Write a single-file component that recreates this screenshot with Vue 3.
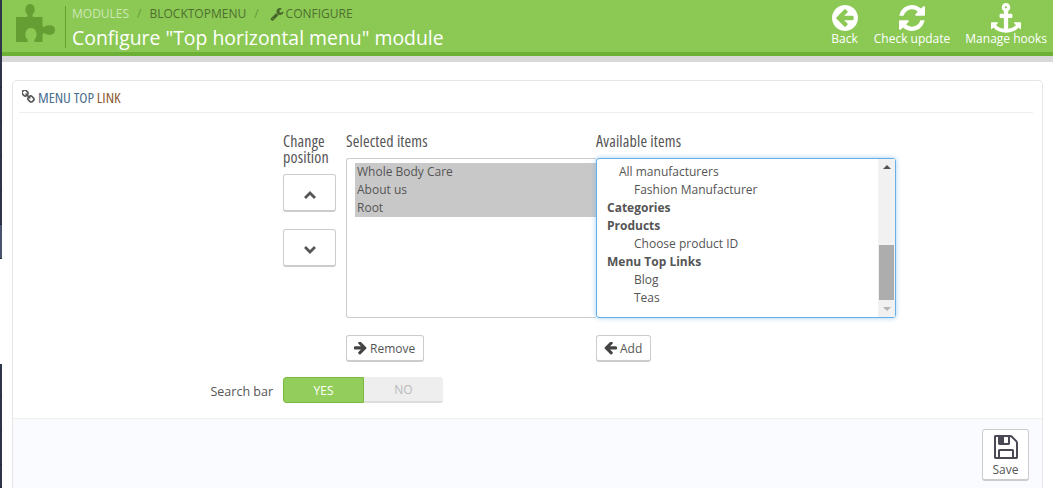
<script setup>
const railTop = [88, 34, 35, 34, 34]
const railBottom = [33, 34, 34, 23]
const selected = ['Whole Body Care', 'About us', 'Root']
const available = [
  { text: 'All manufacturers', level: 1 },
  { text: 'Fashion Manufacturer', level: 2 },
  { text: 'Categories', level: 0 },
  { text: 'Products', level: 0 },
  { text: 'Choose product ID', level: 2 },
  { text: 'Menu Top Links', level: 0 },
  { text: 'Blog', level: 2 },
  { text: 'Teas', level: 2 }
]
</script>

<template>
  <div class="page">
    <aside class="rail">
      <div v-for="(h, i) in railTop" :key="'t' + i" class="seg" :style="{ height: h + 'px' }"></div>
      <div class="seg active"></div>
      <div class="gap"></div>
      <div v-for="(h, i) in railBottom" :key="'b' + i" class="seg" :style="{ height: h + 'px' }"></div>
    </aside>

    <main class="main">
      <header class="head">
        <svg class="puzzle" viewBox="16 4 40 40" width="40" height="40">
          <path fill="#659f33" d="M16 17H26C28 17 28 15 27 14C24 11 25 4 30 4C35 4 36 11 33 14C32 15 32 17 34 17H42.500V25C42.500 27 44 27 45 26.500C47 25 50 25 52 25.500C56 26.500 56 33.500 52 34.500C50 35 47 35 45 33.500C44 33 42.500 33 42.500 35V42H35C34 42 34 40 35 39C38 36 37 28 31 28C25 28 24 36 27 39C28 40 28 42 27 42H16Z"/>
        </svg>
        <div class="titles">
          <div class="crumbs">
            <span class="c-first">MODULES</span>
            <span class="sep">/</span>
            <span>BLOCKTOPMENU</span>
            <span class="sep">/</span>
            <span class="c-last">
              <svg viewBox="0 0 1792 1792" width="14" height="14"><path fill="#45652a" d="M448 1472q0-26-19-45t-45-19-45 19-19 45 19 45 45 19 45-19 19-45zm644-420l-682 682q-37 37-90 37-52 0-91-37l-106-108q-38-36-38-90 0-53 38-91l681-681q39 98 114.500 173.500t173.500 114.500zm634-435q0 39-23 106-47 134-164.500 217.500t-258.500 83.500q-185 0-316.500-131.500t-131.500-316.500 131.500-316.500 316.500-131.500q58 0 121.500 16.500t107.500 46.500q16 11 16 28t-16 28l-293 169v224l193 106q5-3 79-48.500t135.500-81 70.500-35.500q15 0 23.500 10t8.500 25z"/></svg>
              CONFIGURE
            </span>
          </div>
          <h1 class="title">Configure "Top horizontal menu" module</h1>
        </div>
        <nav class="tools">
          <a class="tool tool-back">
            <svg viewBox="0 0 1536 1536" width="26" height="26"><path fill="#fff" transform="translate(0 -128)" d="M1280 960v-128q0-26-19-45t-45-19h-502l189-189q19-19 19-45t-19-45l-91-91q-18-18-45-18t-45 18l-362 362-91 91q-18 18-18 45t18 45l91 91 362 362q18 18 45 18t45-18l91-91q18-18 18-45t-18-45l-189-189h502q26 0 45-19t19-45zm256-64q0 209-103 385.500t-279.500 279.500-385.500 103-385.500-103-279.500-279.500-103-385.500 103-385.500 279.500-279.500 385.500-103 385.500 103 279.500 279.500 103 385.500z"/></svg>
            <span>Back</span>
          </a>
          <a class="tool tool-update">
            <svg viewBox="128 128 1536 1536" width="26" height="26"><path fill="#fff" d="M1639 1056q0 5-1 7-64 268-268 434.500t-478 166.500q-146 0-282.500-55t-243.500-157l-129 129q-19 19-45 19t-45-19-19-45v-448q0-26 19-45t45-19h448q26 0 45 19t19 45-19 45l-137 137q71 66 161 102t187 36q134 0 250-65t186-179q11-17 53-117 8-23 30-23h192q13 0 22.500 9.500t9.500 22.500zm25-800v448q0 26-19 45t-45 19h-448q-26 0-45-19t-19-45 19-45l138-138q-148-137-349-137-134 0-250 65t-186 179q-11 17-53 117-8 23-30 23h-199q-13 0-22.500-9.500t-9.500-22.500v-7q65-268 270-434.500t480-166.500q146 0 284 55.500t245 156.500l130-129q19-19 45-19t45 19 19 45z"/></svg>
            <span>Check update</span>
          </a>
          <a class="tool tool-hooks">
            <svg viewBox="0 0 1792 1792" width="30" height="30"><path fill="#fff" d="M960 256q0-26-19-45t-45-19-45 19-19 45 19 45 45 19 45-19 19-45zm832 928v352q0 22-20 30-8 2-12 2-12 0-23-9l-93-93q-119 143-318.500 226.500t-429.500 83.500-429.500-83.500-318.500-226.500l-93 93q-9 9-23 9-4 0-12-2-20-8-20-30v-352q0-14 9-23t23-9h352q22 0 30 20 8 19-7 35l-100 100q67 91 189.500 153.500t271.500 82.500v-647h-192q-26 0-45-19t-19-45v-128q0-26 19-45t45-19h192v-163q-58-34-93-92.500t-35-128.500q0-106 75-181t181-75 181 75 75 181q0 70-35 128.500t-93 92.500v163h192q26 0 45 19t19 45v128q0 26-19 45t-45 19h-192v647q149-20 271.500-82.500t189.500-153.500l-100-100q-15-16-7-35 8-20 30-20h352q14 0 23 9t9 23z"/></svg>
            <span>Manage hooks</span>
          </a>
        </nav>
      </header>
      <div class="greybar"></div>

      <section class="panel">
        <div class="panel-head">
          <svg viewBox="128 128 1536 1536" width="13" height="13"><path fill="#555" d="M1456 1216q0-40-28-68l-208-208q-28-28-68-28-42 0-72 32 3 3 19 18.500t21.500 21.500 15 19 13 25.500 3.500 27.500q0 40-28 68t-68 28q-15 0-27.500-3.500t-25.500-13-19-15-21.500-21.500-18.500-19q-33 31-33 73 0 40 28 68l206 207q27 27 68 27 40 0 68-26l147-146q28-28 28-67zm-703-705q0-40-28-68l-206-207q-28-28-68-28-39 0-68 27l-147 146q-28 28-28 67 0 40 28 68l208 208q27 27 68 27 42 0 72-31-3-3-19-18.500t-21.500-21.500-15-19-13-25.500-3.500-27.500q0-40 28-68t68-28q15 0 27.500 3.500t25.500 13 19 15 21.500 21.500 18.500 19q33-31 33-73zm895 705q0 120-85 203l-147 146q-83 83-203 83-121 0-204-85l-206-207q-83-83-83-203 0-123 88-209l-88-88q-86 88-208 88-120 0-204-84l-208-208q-84-84-84-204t85-203l147-146q83-83 203-83 121 0 204 85l206 207q83 83 83 203 0 123-88 209l88 88q86-88 208-88 120 0 204 84l208 208q84 84 84 204z"/></svg>
          <span class="panel-title">MENU TOP <b>LINK</b></span>
        </div>

        <div class="form">
          <div class="columns">
            <div class="col-move">
              <div class="col-label">Change</div>
              <div class="col-label">position</div>
              <button class="btn move">
                <svg viewBox="0 0 14 10" width="14" height="10"><path d="M2 8l5-5 5 5" fill="none" stroke="#555" stroke-width="2.800"/></svg>
              </button>
              <button class="btn move move-down">
                <svg viewBox="0 0 14 10" width="14" height="10"><path d="M2 2l5 5 5-5" fill="none" stroke="#555" stroke-width="2.800"/></svg>
              </button>
            </div>
            <div class="col-sel">
              <div class="col-label single">Selected items</div>
              <div class="list list-sel">
                <div v-for="s in selected" :key="s" class="opt on">{{ s }}</div>
              </div>
              <button class="btn act">
                <svg viewBox="128 256 1536 1536" width="13" height="13"><path fill="#444" d="M1600 960q0 54-37 91l-651 651q-39 37-91 37-51 0-90-37l-75-75q-38-38-38-91t38-91l293-293h-704q-52 0-84.500-37.500t-32.500-90.500v-128q0-53 32.500-90.500t84.500-37.500h704l-293-294q-38-36-38-90t38-90l75-75q38-38 90-38 53 0 91 38l651 651q37 35 37 90z"/></svg>
                Remove
              </button>
            </div>
            <div class="col-avail">
              <div class="col-label single">Available items</div>
              <div class="list list-avail">
                <div class="avail-items">
                  <div v-for="o in available" :key="o.text" class="opt" :class="'lvl' + o.level">{{ o.text }}</div>
                </div>
                <div class="scroll">
                  <i class="arrow up"></i>
                  <div class="track"><div class="thumb"></div></div>
                  <i class="arrow down"></i>
                </div>
              </div>
              <button class="btn act">
                <svg viewBox="128 256 1536 1536" width="13" height="13"><path fill="#444" d="M1664 896v128q0 53-32.500 90.500t-84.500 37.500h-704l293 294q38 36 38 90t-38 90l-75 76q-37 37-90 37-52 0-91-37l-651-652q-37-37-37-90 0-52 37-91l651-650q38-38 91-38 52 0 90 38l75 74q38 38 38 91t-38 91l-293 293h704q52 0 84.500 37.500t32.500 90.500z"/></svg>
                Add
              </button>
            </div>
          </div>
          <div class="search-row">
            <span class="search-label">Search bar</span>
            <div class="switch">
              <span class="yes">YES</span>
              <span class="no">NO</span>
            </div>
          </div>
        </div>

        <footer class="panel-foot">
          <button class="btn save">
            <svg viewBox="128 128 1536 1536" width="24" height="24"><path fill="#4a4a55" d="M512 1536h768v-384h-768v384zm896 0h128v-896q0-14-10-38.500t-20-34.500l-281-281q-10-10-34-20t-39-10v416q0 40-28 68t-68 28h-576q-40 0-68-28t-28-68v-416h-128v1280h128v-416q0-40 28-68t68-28h832q40 0 68 28t28 68v416zm-384-928v-320q0-13-9.500-22.500t-22.500-9.500h-192q-13 0-22.500 9.500t-9.500 22.500v320q0 13 9.500 22.500t22.500 9.500h192q13 0 22.500-9.500t9.500-22.500zm640 32v928q0 40-28 68t-68 28h-1344q-40 0-68-28t-28-68v-1344q0-40 28-68t68-28h928q40 0 88 20t76 48l280 280q28 28 48 76t20 88z"/></svg>
            <span>Save</span>
          </button>
        </footer>
      </section>
    </main>
  </div>
</template>

<style scoped>
.page { display: flex; width: 1053px; height: 488px; overflow: hidden; background: #fff; font-family: "Open Sans", sans-serif; color: #555; }
.rail { width: 2px; flex: none; display: flex; flex-direction: column; }
.seg { flex: none; background: #2f3549; border-bottom: 1px solid #252a3a; box-sizing: border-box; }
.seg.active { height: 34px; background: #49546e; }
.gap { flex: none; height: 105px; background: #fff; }

.main { width: 1051px; flex: none; display: flex; flex-direction: column; }
.head { height: 52px; box-sizing: content-box; background: #8bc954; border-bottom: 4px solid #6cb036; display: flex; align-items: flex-start; }
.puzzle { margin: 4px 0 0 14px; flex: none; }
.titles { margin: 6px 0 0 9px; padding-left: 6px; border-left: 1px solid #639f30; height: 42px; }
.crumbs { font-size: 12px; line-height: 15px; color: #4e6f30; display: flex; gap: 8px; white-space: nowrap; }
.c-first { color: #cde7b4; }
.sep { color: #6a9a40; }
.c-last { display: flex; align-items: center; gap: 2px; margin-left: 3px; }
.title { margin: 5px 0 0; font-weight: 400; font-size: 19.400px; line-height: 24px; color: #fff; white-space: nowrap; }
.tools { margin-left: auto; display: flex; color: #fff; font-size: 12px; }
.tool { display: flex; flex-direction: column; align-items: center; white-space: nowrap; }
.tool svg { margin-top: 5px; }
.tool span { line-height: 14px; margin-top: 1px; }
.tool-hooks svg { margin-top: 3px; }
.tool-hooks span { margin-top: -1px; }
.tool-back { margin-right: 16px; }
.tool-update { margin-right: 15px; }
.tool-hooks { margin-right: 6px; }
.greybar { height: 6px; background: #d8d8d8; }

.panel { margin: 18px 10px 0; border: 1px solid #e6e6e6; border-bottom: 0; border-radius: 5px 5px 0 0; flex: 1; display: flex; flex-direction: column; min-height: 0; }
.panel-head { margin: 0 9px 0 6px; padding: 0 0 0 3px; height: 31px; border-bottom: 1px solid #eee; display: flex; align-items: center; gap: 3px; }
.panel-title { font-family: "Open Sans", sans-serif; font-stretch: 75%; font-size: 15px; color: #4b6f8f; white-space: nowrap; }
.panel-title b { font-weight: 400; color: #8f5a36; }

.form { flex: 1; padding: 0 0 0 270px; position: relative; }
.columns { display: flex; }
.col-label { font-family: "Open Sans", sans-serif; font-stretch: 75%; font-size: 16px; letter-spacing: .15px; line-height: 16px; color: #555; white-space: nowrap; }
.col-label.single { height: 45px; padding-top: 20px; box-sizing: border-box; }
.col-move { width: 53px; margin-right: 10px; padding-top: 20px; }
.btn { font-family: "Open Sans", sans-serif; background: #fff; border: 1px solid #ccc; border-bottom: 2px solid #ccc; border-radius: 3px; color: #555; padding: 0; display: flex; align-items: center; justify-content: center; box-sizing: border-box; }
.move { width: 53px; height: 38px; margin-top: 9px; padding-top: 4px; }
.move-down { margin-top: 17px; }
.col-sel { width: 250px; }
.col-avail { width: 300px; }
.list { box-sizing: border-box; height: 160px; background: #fff; }
.list-sel { border: 1px solid #ccc; border-right: 0; border-radius: 3px 0 0 3px; padding: 4px 0 0 8px; }
.list-avail { border: 1px solid #66afe9; border-radius: 3px; box-shadow: 0 0 5px rgba(102, 175, 233, .6); display: flex; position: relative; }
.avail-items { flex: 1; padding-top: 4px; }
.opt { font-size: 12px; line-height: 18px; white-space: nowrap; color: #555; padding-left: 2px; }
.opt.on { background: #c8c8c8; }
.lvl0 { font-weight: 700; padding-left: 10px; }
.lvl1 { padding-left: 22px; }
.lvl2 { padding-left: 37px; }
.scroll { width: 17px; background: #f1f1f1; display: flex; flex-direction: column; align-items: center; }
.track { flex: 1; width: 100%; display: flex; flex-direction: column; justify-content: flex-end; padding: 0 1px; box-sizing: border-box; }
.thumb { height: 55px; background: #adadad; }
.arrow { flex: none; width: 0; height: 0; border-left: 4px solid transparent; border-right: 4px solid transparent; }
.arrow.up { border-bottom: 4px solid #505050; margin: 6px 0 7px; }
.arrow.down { border-top: 4px solid #b5b5b5; margin: 7px 0 6px; }
.act { height: 27px; margin-top: 17px; font-size: 12px; gap: 3px; padding: 0 8px 0 7px; }
.search-row { display: flex; align-items: center; margin: 15px 0 0 -83px; }
.search-label { width: 73px; margin-right: 10px; text-align: right; font-size: 12.500px; padding-top: 3px; white-space: nowrap; }
.switch { display: flex; width: 160px; height: 26px; border-radius: 3px; overflow: hidden; font-size: 12px; line-height: 25px; text-align: center; font-weight: 500; }
.yes { flex: 1; background: #93ce5c; border: 1px solid #78bb3f; border-radius: 3px 0 0 3px; color: #fff; box-sizing: border-box; }
.no { flex: 1; background: #eee; color: #bbb; box-sizing: border-box; border-bottom: 2px solid #ddd; }

.panel-foot { height: 70px; background: #fafbfe; border-top: 1px solid #eee; display: flex; justify-content: flex-end; padding: 10px 13px 0 0; box-sizing: border-box; flex: none; }
.save { width: 47px; height: 52px; flex-direction: column; font-size: 12px; gap: 2px; padding-top: 4px; }
</style>
